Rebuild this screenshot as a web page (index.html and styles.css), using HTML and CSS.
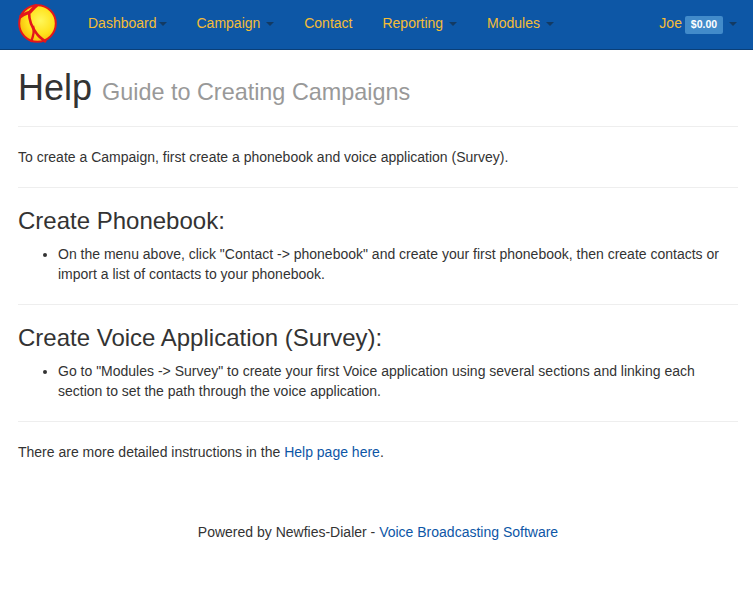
FILE: index.html
```html
<!DOCTYPE html>
<html lang="en">
<head>
<meta charset="utf-8">
<title>Help</title>
<link rel="stylesheet" href="styles.css">
</head>
<body>
<nav class="navbar">
  <a class="brand" href="#">
    <svg class="logo" width="40" height="40" viewBox="0 0 40 40">
      <defs>
        <radialGradient id="ball" cx="0.58" cy="0.42" r="0.62">
          <stop offset="0" stop-color="#fff75a"/>
          <stop offset="0.6" stop-color="#ffe21c"/>
          <stop offset="1" stop-color="#f7b80c"/>
        </radialGradient>
      </defs>
      <circle cx="19.5" cy="19.5" r="18.3" fill="url(#ball)" stroke="#e3161b" stroke-width="2"/>
      <path d="M2 13 C6 10 9 9 12 8 C14 6 16 3 19 1" fill="none" stroke="#e3161b" stroke-width="3.4"/>
      <path d="M11 8 C11 17 14 24 19 30 C21 33 24 35 28 38" fill="none" stroke="#e3161b" stroke-width="2.6"/>
      <path d="M15 22 C17 27 15 33 13 38" fill="none" stroke="#e3161b" stroke-width="2.4"/>
    </svg>
  </a>
  <ul class="nav">
    <li><a href="#">Dashboard<b class="caret"></b></a></li>
    <li><a href="#">Campaign <b class="caret"></b></a></li>
    <li><a href="#">Contact</a></li>
    <li><a href="#">Reporting <b class="caret"></b></a></li>
    <li><a href="#">Modules <b class="caret"></b></a></li>
  </ul>
  <ul class="nav nav-right">
    <li><a href="#">Joe <span class="badge">$0.00</span> <b class="caret"></b></a></li>
  </ul>
</nav>
<main class="container">
  <div class="page-header">
    <h1>Help <small>Guide to Creating Campaigns</small></h1>
  </div>
  <p>To create a Campaign, first create a phonebook and voice application (Survey).</p>
  <hr>
  <h3>Create Phonebook:</h3>
  <ul class="steps">
    <li>On the menu above, click "Contact -&gt; phonebook" and create your first phonebook, then create contacts or import a list of contacts to your phonebook.</li>
  </ul>
  <hr>
  <h3>Create Voice Application (Survey):</h3>
  <ul class="steps">
    <li>Go to "Modules -&gt; Survey" to create your first Voice application using several sections and linking each section to set the path through the voice application.</li>
  </ul>
  <hr>
  <p>There are more detailed instructions in the <a href="#">Help page here</a>.</p>
</main>
<footer class="footer">Powered by Newfies-Dialer - <a href="#">Voice Broadcasting Software</a></footer>
</body>
</html>
```
FILE: styles.css
```css
* { box-sizing: border-box; }
html, body { margin: 0; }
body {
  font-family: "Liberation Sans", Arial, sans-serif;
  font-size: 14px;
  line-height: 20px;
  color: #333;
  background: #fff;
}
a { color: #0d56a6; text-decoration: none; }
.navbar {
  display: flex;
  height: 50px;
  padding: 0 16px 0 18px;
  background: #0d57a6;
  border-bottom: 1px solid #0a3f78;
}
.brand { display: block; height: 49px; padding-top: 4px; }
.logo { display: block; }
.nav {
  display: flex;
  list-style: none;
  margin: 0 0 0 15px;
  padding: 0;
}
.nav-right { margin-left: auto; }
.nav a {
  display: block;
  padding: 13px 15px 16px;
  color: #f4bd37;
}
.nav-right a { padding-right: 0; }
.caret {
  display: inline-block;
  width: 0;
  height: 0;
  margin-left: 2px;
  vertical-align: middle;
  border-top: 4px solid #123a63;
  border-left: 4px solid transparent;
  border-right: 4px solid transparent;
}
.badge {
  display: inline-block;
  min-width: 10px;
  margin-left: -1px;
  padding: 3px 6px 4px;
  font-size: 10.5px;
  font-weight: bold;
  line-height: 1;
  color: #fff;
  text-align: center;
  vertical-align: baseline;
  background: #428bca;
  border-radius: 2px;
}
.container { padding: 0 15px 0 18px; }
.page-header {
  margin: 0 0 20px;
  padding: 0 0 8px;
  border-bottom: 1px solid #eee;
}
h1 {
  margin: 18px 0 10px;
  font-size: 36px;
  font-weight: 500;
  line-height: 1.1;
  text-rendering: optimizeLegibility;
}
small {
  font-size: 65%;
  font-weight: normal;
  line-height: 1;
  color: #999;
}
p { margin: 0 0 10px; }
hr {
  margin: 20px 0;
  border: 0;
  border-top: 1px solid #eee;
}
h3 {
  margin: 20px 0 10px;
  font-size: 24px;
  font-weight: 500;
  line-height: 1.1;
  text-rendering: optimizeLegibility;
}
.steps { margin: 0 0 10px; padding-left: 40px; }
.footer {
  margin-top: 60px;
  padding: 0 15px 0 18px;
  text-align: center;
}
```
